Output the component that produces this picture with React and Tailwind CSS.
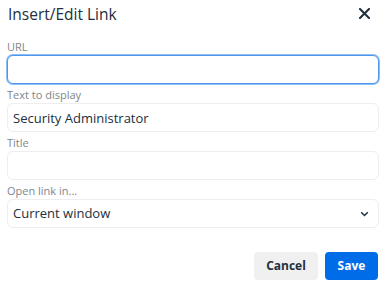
import { useState } from "react";

function Field({ label, children }) {
  return (
    <div className="flex flex-col">
      <label className="text-[11px] leading-[14px] text-[#80868d] mb-px">{label}</label>
      {children}
    </div>
  );
}

export default function App() {
  const [url, setUrl] = useState("");
  const [text, setText] = useState("Security Administrator");
  const [title, setTitle] = useState("");
  const [target, setTarget] = useState("current");

  const inputClass =
    "h-[29px] w-full rounded-[6px] border border-[#eeeeee] bg-white px-[5px] text-[13px] text-[#222f3e] outline-none";

  return (
    <div
      className="w-[387px] h-[285px] bg-white text-[#222f3e] overflow-hidden"
      style={{ fontFamily: '"Open Sans", "Noto Sans", sans-serif' }}
    >
      {/* Header */}
      <div className="flex items-start justify-between h-[40px] pl-[8px] pr-[17px] pt-[3px]">
        <h1 className="text-[15.5px] leading-[22px] font-normal">Insert/Edit Link</h1>
        <button className="mt-[5px] text-[#222f3e]">
          <svg width="11" height="11" viewBox="0 0 11 11">
            <path d="M1 1 L10 10 M10 1 L1 10" stroke="currentColor" strokeWidth="2.1" strokeLinecap="round" />
          </svg>
        </button>
      </div>

      {/* Body */}
      <div className="flex flex-col gap-[4px] pl-[7px] pr-[8px]">
        <Field label="URL">
          <input
            value={url}
            onChange={(e) => setUrl(e.target.value)}
            className="h-[29px] w-full rounded-[6px] border border-[#4f97ee] bg-white px-[5px] text-[13px] text-[#222f3e] outline-none shadow-[0_0_0_1px_rgba(0,108,231,0.45)]"
          />
        </Field>
        <Field label="Text to display">
          <input value={text} onChange={(e) => setText(e.target.value)} className={inputClass} />
        </Field>
        <Field label="Title">
          <input value={title} onChange={(e) => setTitle(e.target.value)} className={inputClass} />
        </Field>
        <Field label="Open link in...">
          <div className="relative">
            <select
              value={target}
              onChange={(e) => setTarget(e.target.value)}
              className={inputClass + " appearance-none pr-6"}
            >
              <option value="current">Current window</option>
              <option value="new">New window</option>
            </select>
            <svg
              className="absolute right-[10px] top-[12px] pointer-events-none"
              width="9"
              height="6"
              viewBox="0 0 9 6"
            >
              <path d="M1.2 1.2 L4.5 4.5 L7.8 1.2" fill="none" stroke="#222f3e" strokeWidth="1.5" />
            </svg>
          </div>
        </Field>
      </div>

      {/* Footer */}
      <div className="flex justify-end gap-[7px] pr-[9px] pt-[24px]">
        <button className="h-[28px] w-[64px] rounded-[4px] bg-[#f0f0f0] text-[12px] font-bold text-[#222f3e]">
          Cancel
        </button>
        <button className="h-[28px] w-[53px] rounded-[4px] bg-[#006ce7] text-[12px] font-bold text-white">
          Save
        </button>
      </div>
    </div>
  );
}
